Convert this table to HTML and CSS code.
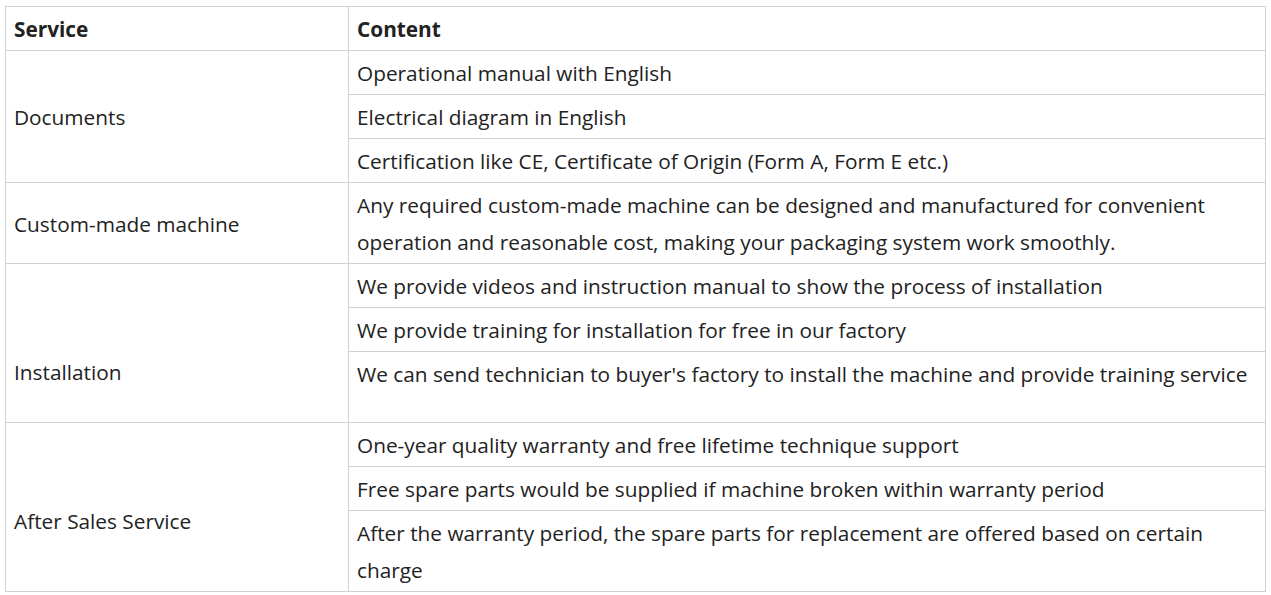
FILE: index.html
```html
<!DOCTYPE html>
<html lang="en">
<head>
    <meta charset="UTF-8">
    <meta name="viewport" content="width=device-width, initial-scale=1.0">
    <title>Service</title>
    <link rel="stylesheet" href="styles.css">
</head>
<body>
    <table class="service-table">
        <thead>
            <tr>
                <th class="col-service">Service</th>
                <th>Content</th>
            </tr>
        </thead>
        <tbody>
            <tr>
                <td rowspan="3">Documents</td>
                <td>Operational manual with English</td>
            </tr>
            <tr>
                <td>Electrical diagram in English</td>
            </tr>
            <tr>
                <td>Certification like CE, Certificate of Origin (Form A, Form E etc.)</td>
            </tr>
            <tr>
                <td>Custom-made machine</td>
                <td>Any required custom-made machine can be designed and manufactured for convenient operation and reasonable cost, making your packaging system work smoothly.</td>
            </tr>
            <tr>
                <td rowspan="3" class="shift-lg">Installation</td>
                <td>We provide videos and instruction manual to show the process of installation</td>
            </tr>
            <tr>
                <td>We provide training for installation for free in our factory</td>
            </tr>
            <tr>
                <td class="tall">We can send technician to buyer's factory to install the machine and provide training service</td>
            </tr>
            <tr>
                <td rowspan="3" class="shift-md">After Sales Service</td>
                <td>One-year quality warranty and free lifetime technique support</td>
            </tr>
            <tr>
                <td>Free spare parts would be supplied if machine broken within warranty period</td>
            </tr>
            <tr>
                <td>After the warranty period, the spare parts for replacement are offered based on certain charge</td>
            </tr>
        </tbody>
    </table>
</body>
</html>
```

FILE: styles.css
```css
* {
    box-sizing: border-box;
}

body {
    margin: 6px 5px;
    background: #fff;
    color: #222;
    font-family: 'Open Sans', 'Noto Sans', sans-serif;
    font-size: 20.8px;
}

.service-table {
    width: 1261px;
    border-collapse: collapse;
}

.service-table th,
.service-table td {
    border: 1px solid #d2d2d2;
    padding: 4px 8px 2px;
    line-height: 37px;
    text-align: left;
    vertical-align: middle;
}

.service-table th {
    font-weight: 700;
}

.col-service {
    width: 343px;
}

.service-table td.tall {
    vertical-align: top;
    height: 71px;
}

.service-table td.shift-lg {
    padding-top: 60px;
}

.service-table td.shift-md {
    padding-top: 30px;
}
```
